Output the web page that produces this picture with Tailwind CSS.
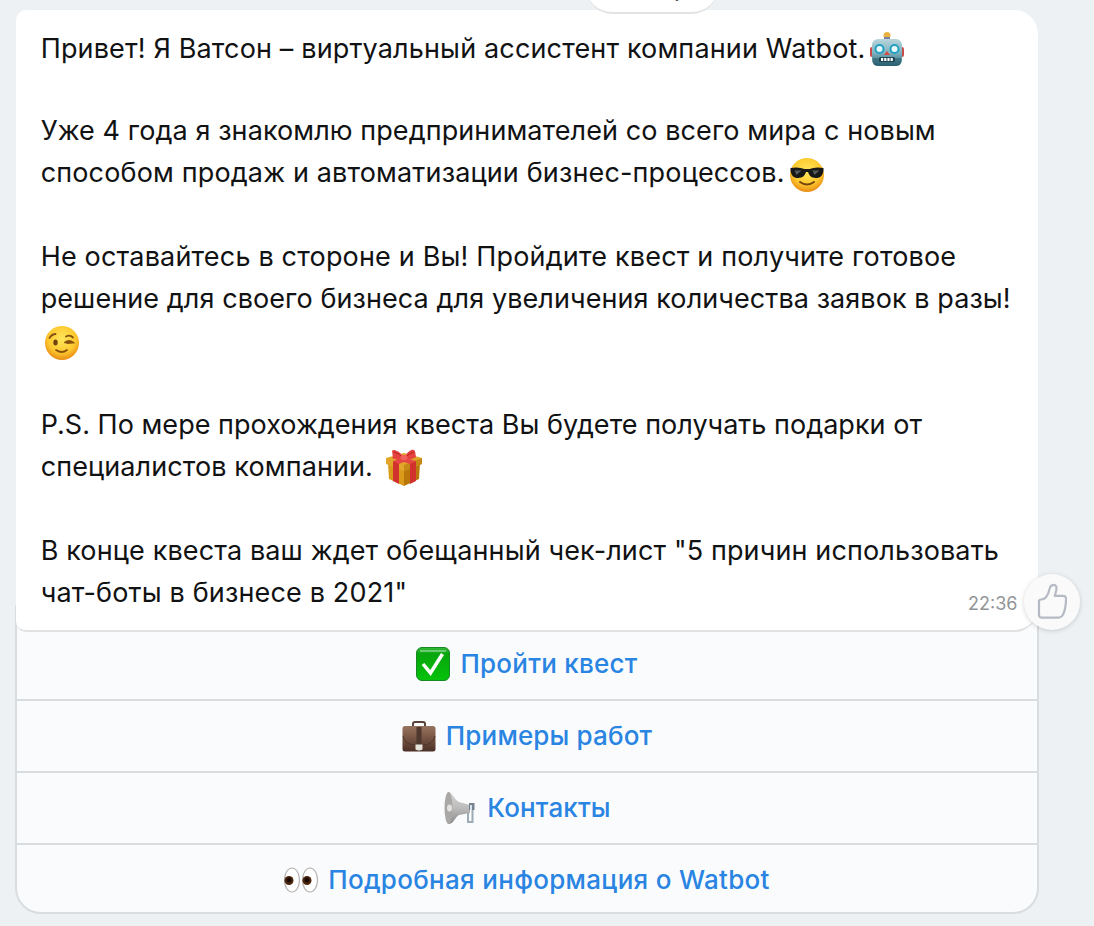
<!DOCTYPE html>
<html lang="ru">
<head>
<meta charset="utf-8">
<title>Watbot</title>
<script src="https://cdn.jsdelivr.net/npm/@tailwindcss/browser@4"></script>
</head>
<body class="relative h-[926px] overflow-hidden bg-[#edf1f4] font-['Inter','Liberation_Sans',sans-serif] text-[27px] leading-[42px] text-[#111213]">
<svg class="absolute size-0" aria-hidden="true">
  <defs>
    <radialGradient id="face" cx=".5" cy=".38" r=".62"><stop offset="0" stop-color="#ffe65c"/><stop offset=".65" stop-color="#fdc92f"/><stop offset="1" stop-color="#e98b14"/></radialGradient>
    <linearGradient id="metal" x2="0" y2="1"><stop offset="0" stop-color="#b9d5dc"/><stop offset=".5" stop-color="#7fb4c1"/><stop offset="1" stop-color="#2f6678"/></linearGradient>
    <linearGradient id="green" x2="0" y2="1"><stop offset="0" stop-color="#35b83a"/><stop offset=".2" stop-color="#08a60d"/><stop offset="1" stop-color="#05c20b"/></linearGradient>
    <linearGradient id="leather" x2="0" y2="1"><stop offset="0" stop-color="#97745f"/><stop offset=".5" stop-color="#755342"/><stop offset="1" stop-color="#4b3026"/></linearGradient>
    <linearGradient id="horn" x2="0" y2="1"><stop offset="0" stop-color="#d5d5d5"/><stop offset=".5" stop-color="#bdbcbc"/><stop offset="1" stop-color="#8b8989"/></linearGradient>
  </defs>
</svg>

<div class="relative ml-[15px] mt-[10px] w-[1024px]">
  <section class="relative z-10 mx-px flex h-[622px] flex-col rounded-l-[10px] rounded-r-[24px] border-b-2 border-[#dfe1e3] bg-white pl-[24.7px] pt-[18px] whitespace-nowrap">
    <p class="flex h-[42px]"><span class="tracking-[0.15px]">Привет! Я Ватсон – виртуальный ассистент компании Watbot.</span>
      <svg class="ml-1 mt-[3px] h-9 w-9" viewBox="0 0 36 36"><path d="M17 5h2v6h-2z" fill="#6e9aa4"/><circle cx="18" cy="4.500" r="3.500" fill="#e9b23e"/><path d="M15 6h6v3h-6z" fill="#7780a6"/><rect x="1" y="16" width="34" height="10" rx="2" fill="#c84c4b"/><rect x="3" y="8" width="30" height="27" rx="6" fill="url(#metal)"/><path d="M4 27h28v3q0 5-5 5H9q-5 0-5-5z" fill="#265a6b" opacity=".5"/><circle cx="10.500" cy="18" r="4" fill="#e9fbff" stroke="#239fc2" stroke-width="2"/><circle cx="25.500" cy="18" r="4" fill="#e9fbff" stroke="#239fc2" stroke-width="2"/><path d="M18 20l3 4h-6z" fill="#d94b43"/><rect x="10" y="26" width="16" height="5" rx="1.500" fill="#1d4452"/><path d="M12 28.500h12" stroke="#fff" stroke-width="3" stroke-dasharray="2.200 1"/></svg>
    </p>
    <p class="mt-10 h-[42px] tracking-[0.085px]">Уже 4 года я знакомлю предпринимателей со всего мира с новым</p>
    <p class="flex h-[42px]"><span class="tracking-[0.15px]">способом продаж и автоматизации бизнес-процессов.</span>
      <svg class="ml-1 mt-[5px] h-9 w-9" viewBox="0 0 36 36"><circle cx="18" cy="18" r="17" fill="url(#face)"/><path d="M1.500 11q8-1.500 14 1h5q6-2.500 14-1v2.500c-1 5.500-3 7.500-7.500 7.500-5 0-7-3-8-6h-2c-1 3-3 6-8 6-4.500 0-6.500-2-7.500-7.500z" fill="#171817"/><path d="M5.500 13.500h7l-5 4.500zM23.500 13.500h7l-5 4.500z" fill="#545b5b"/><path d="M11 25q7 5 14 0" fill="none" stroke="#76440c" stroke-width="2" stroke-linecap="round"/></svg>
    </p>
    <p class="mt-[42px] h-[42px] tracking-[0.175px]">Не оставайтесь в стороне и Вы! Пройдите квест и получите готовое</p>
    <p class="h-[42px] tracking-[0.08px]">решение для своего бизнеса для увеличения количества заявок в разы!</p>
    <p class="h-[42px]">
      <svg class="ml-[3px] mt-[5px] h-9 w-9" viewBox="0 0 36 36"><circle cx="18" cy="18" r="17" fill="url(#face)"/><ellipse cx="11.500" cy="17.500" rx="2.200" ry="3" fill="#70420e"/><path d="M5.500 13q2.500-4 6-4M22 11.500q4-2 7 1M21 17.500q4-3 8 0l-6 .5M12 25q6 4 11 0" fill="none" stroke="#87500f" stroke-width="1.800" stroke-linecap="round"/></svg>
    </p>
    <p class="mt-[42px] h-[42px] tracking-[0.025px]">P.S. По мере прохождения квеста Вы будете получать подарки от</p>
    <p class="flex h-[42px]"><span class="tracking-[0.1px]">специалистов компании.</span>
      <svg class="ml-[12px] mt-[3px] h-[38px] w-[38px]" viewBox="0 0 38 38"><path d="M3 14l16 7v16L4 30z" fill="#d99b19"/><path d="M35 14l-16 7v16l15-7z" fill="#b97809"/><path d="M1 9l18-5 18 5v6l-18 7L1 15z" fill="#e2a62a"/><path d="M19 16l18-7v6l-18 7z" fill="#c58a15"/><path d="M8 12l6 2v21l-6-3zM25 14l6-2v20l-6 3z" fill="#d2322e"/><path d="M8 12l18-6 5 2-17 7zM10 6l21 6-6 3L7 9z" fill="#e54844"/><path d="M19 8C13 1 8 0 7 2l1 7q4 2 11 0zM19 8c5-7 9-9 11-6l1 6q-4 3-12 1z" fill="#e6423f"/><path d="M9 3q5 1 9 6M29 3q-5 1-9 6" stroke="#ad2527" fill="none"/><rect x="15.500" y="6" width="7" height="5" rx="2" fill="#f1605a"/></svg>
    </p>
    <p class="mt-[42px] h-[42px] tracking-[0.13px]">В конце квеста ваш ждет обещанный чек-лист "5 причин использовать</p>
    <p class="h-[42px] tracking-[0.16px]">чат-боты в бизнесе в 2021"</p>
    <time class="absolute bottom-[5px] right-[20.5px] text-[18px] text-[#929497]">22:36</time>
    <button class="absolute left-[1008px] top-[564px] flex size-14 items-center justify-center rounded-full bg-[#fafafb] shadow-[0_1px_5px_rgba(0,0,0,.16)]">
      <svg class="mb-[2px] h-9 w-[30px] shrink-0" viewBox="0 0 30 36" fill="none" stroke="#b5bac3" stroke-width="2.200" stroke-linejoin="round"><path d="M2 18.500Q2 16.500 4 16.500C8.500 16.500 11.500 11 12.700 5.500C13.400 1.500 18 1 19.200 3.500C20.300 6 18.500 9.500 17.800 12.800H26C28.500 12.800 29.200 14 29 17C28.800 22.500 28.300 27.500 26 31.500C24.500 34.300 23.500 34.700 20.500 34.700H5Q2 34.700 2 31.700Z"/></svg>
    </button>
  </section>

  <nav class="-mt-8 h-[314px] rounded-b-[26px] rounded-t-[8px] border-2 border-[#d9dde0] bg-[#fafbfd] pt-[27px] text-[26px] font-medium text-[#2984e2]">
    <a class="flex h-[72px] items-center justify-center border-b-2 border-[#d9dde0]">
      <svg class="mr-[10px] h-[34px] w-[34px]" viewBox="0 0 34 34"><rect x=".5" y=".5" width="33" height="33" rx="5.500" fill="url(#green)" stroke="#168824"/><path d="M4 3h26v2H4z" fill="#fff" opacity=".35"/><path d="M7 17l7.500 9L26.500 7" fill="none" stroke="#fff" stroke-width="3.500"/></svg><span class="tracking-[0.25px]">Пройти квест</span></a>
    <a class="flex h-[72px] items-center justify-center border-b-2 border-[#d9dde0]">
      <svg class="mr-[10px] h-[34px] w-[34px]" viewBox="0 0 34 34"><path d="M11 8V5q0-2 2-2h8q2 0 2 2v3" fill="none" stroke="#59443c" stroke-width="2"/><rect x=".5" y="7" width="33" height="25.500" rx="2.500" fill="url(#leather)"/><path d="M1 17q2 9 12 9h8q10 0 12-9" fill="none" stroke="#4e352b"/><path d="M14.500 8h5v18h-5z" fill="#4f382d"/><path d="M13.500 25.500h7v5q-3.500 2-7 0z" fill="#e5e4dc"/></svg><span class="tracking-[0.15px]">Примеры работ</span></a>
    <a class="flex h-[72px] items-center justify-center border-b-2 border-[#d9dde0]">
      <svg class="mr-[10px] h-[34px] w-[34px]" viewBox="0 0 34 34"><path d="M25 14v17h4.500V14" fill="none" stroke="#9babb7" stroke-width="2"/><path d="M5 1c5 0 6 8 11 10l11 3v8l-11 2c-4 2-5 9-11 9z" fill="url(#horn)"/><ellipse cx="5.500" cy="17" rx="4" ry="16" fill="#aaa8a6"/><ellipse cx="6.500" cy="17" rx="2.500" ry="3.500" fill="#e3e2e1"/><path d="M26 12h5.500v7H26z" fill="#77838e"/><path d="M27 14h2v5h-2z" fill="#d7e2ea"/></svg><span class="tracking-[0.15px]">Контакты</span></a>
    <a class="flex h-[72px] items-center justify-center pb-[2px]">
      <svg class="mr-[10px] h-[34px] w-[34px]" viewBox="0 0 34 34"><g fill="#fff" stroke="#b5b3b1" stroke-width="1.200"><ellipse cx="8" cy="17" rx="7.500" ry="12"/><ellipse cx="26" cy="17" rx="7.500" ry="12"/></g><g fill="#4d270c"><circle cx="5" cy="17.500" r="4.500"/><circle cx="23" cy="17.500" r="4.500"/></g><g fill="#1b0b04"><circle cx="5" cy="17" r="2.500"/><circle cx="23" cy="17" r="2.500"/></g></svg><span class="tracking-[0.3px]">Подробная информация о Watbot</span></a>
  </nav>
</div>
<div class="absolute left-[587px] top-[-36px] z-20 flex h-[50px] w-[130px] items-center justify-center rounded-[25px] border-b-2 border-[#e1e3e5] bg-white pb-[1px] text-[24px]">18 апр</div>
</body>
</html>
